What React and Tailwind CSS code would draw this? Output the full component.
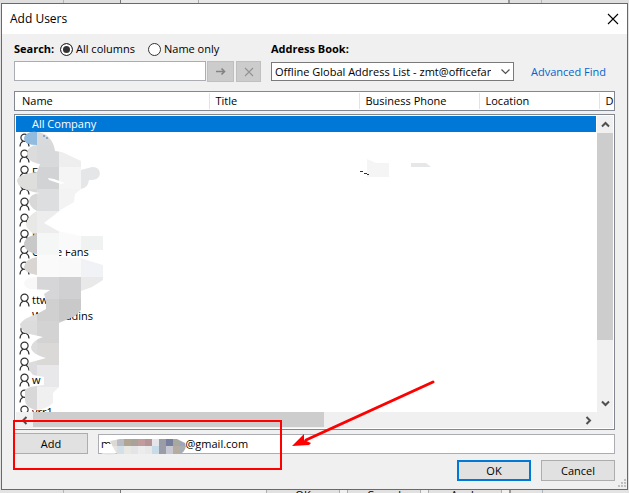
import React from "react";

const rows = [
  { name: "", icon: true },
  { name: "", icon: true },
  { name: "F", icon: true },
  { name: "", icon: true },
  { name: "", icon: true },
  { name: "", icon: true },
  { name: "N", icon: true },
  { name: "Office Fans", icon: true },
  { name: "", icon: true },
  { name: "", icon: false },
  { name: "ttw", icon: true },
  { name: "Web Addins", icon: false },
  { name: "", icon: true },
  { name: "", icon: true },
  { name: "", icon: true },
  { name: "w", icon: true },
  { name: "", icon: true },
  { name: "yrr1", icon: true },
];

const tiles = [
  ["#91bce0", "#d9dadb", "#e0e0e0", "#eeeeee"],
  ["#dcdcdc", "#d8d9da", "#eeeeee", "#eeeeee"],
  ["#dededc", "#d2d3d4", "#f5f5f5", "#e5e6e8"],
  ["#d8d8d8", "#dddedf", "#f3f3f3", "#f5f5f5"],
  ["#e8e8e6", "#ededed", "#fafafa", "#ffffff"],
  ["#c8c8c8", "#f5f6f6", "#fafafa", "#f0f2f1"],
  ["#d8d5d3", "#fafafa", "#f9f9f9", "#f1f2f5"],
  ["#f8f8f8", "#d6d6d8", "#d0d0d2", "#e9e9e9"],
  ["#dedede", "#d0d0d0", "#c9c9ca", "#ffffff"],
  ["#dcdcdc", "#d3d3d3", "#d0d0d0", "#ffffff"],
  ["#dcdcdc", "#dad9d7", "#ffffff", "#ffffff"],
  ["#dcdce0", "#e8e8ea", "#ffffff", "#ffffff"],
  ["#d8d8d8", "#f0f0f0", "#ffffff", "#ffffff"],
];

const mailTiles = [
  ["#dcd9d4", "#b9bcc4", "#b0a590", "#a8a29a", "#c09c9c", "#b49494", "#e6e6ea", "#9a9ca8", "#76809c", "#a8a8a0", "#9ca6b8"],
  ["#e6e4e0", "#d4e0e8", "#e8e8e4", "#e4e4e8", "#ececec", "#e8e8e8", "#c8dce8", "#9a9ca8", "#c8c8d4", "#b4aca0", "#a8acb4"],
];

function Person() {
  return (
    <svg width="11" height="14" viewBox="0 0 11 14" fill="none" stroke="#333" strokeWidth="1.2" aria-hidden="true">
      <circle cx="5.5" cy="4.7" r="3.6" />
      <path d="M1 13.5C1 10.5 2.4 9 4 8.2M10 13.5C10 10.5 8.6 9 7 8.2" />
    </svg>
  );
}

function Chevron({ d }) {
  return (
    <svg width="9" height="9" viewBox="0 0 9 9" fill="none" stroke="#505050" strokeWidth="2" aria-hidden="true">
      <path d={d} />
    </svg>
  );
}

function Annotations() {
  return (
    <svg className="pointer-events-none absolute left-0 top-0" width="629" height="493" viewBox="0 0 629 493" aria-hidden="true">
      <defs>
        <clipPath id="smear">
          <path d="M24 139C24 134 30 131 36 132C46 132 54 140 55 151L62 152L81 161V170L92 167C102 166 103 180 92 180H89Q88 188 81 189L75 194L74 202L62 209L44 223L58 231L81 236H103V250H59V257L80 258L103 265V280L92 287L81 291V310L75 316L59 323V387L53 393V403Q47 409 35 410Q25 407 25 400V390Q28 386 44 385V377L33 375Q28 370 28 363L46 358Q31 354 31 347Q33 340 43 337L25 333Q20 328 20 324Q24 318 37 314L46 309V300L44 294L50 290L30 289Q24 287 24 283Q25 277 37 277V275Q24 273 24 267Q25 259 37 257V254Q24 252 24 243Q26 236 35 235Q26 229 26 224Q28 215 37 211Q29 207 29 200Q30 194 40 193Q17 190 17 180Q19 174 37 172L40 164Q27 162 27 153Q29 145 37 145Q25 145 24 139Z" />
        </clipPath>
        <clipPath id="mailSmear">
          <path d="M110 441L120 439H177L185 443Q187 449 182 453L177 454H117L114 449Z" />
        </clipPath>
      </defs>
      <path d="M59 240H103V249H59ZM37 247H59V258H37Z" fill="#fff" />
      <g clipPath="url(#smear)" shapeRendering="crispEdges">
        {tiles.map((row, r) =>
          row.map((c, i) => <rect key={`${r}-${i}`} x={15 + i * 22} y={123 + r * 22} width="22" height={r === 12 ? 26 : 22} fill={c} />)
        )}
      </g>
      <path d="M48 178L54 179L65 183L61 184L49 180Z" fill="#fff" />
      <path d="M43 136h2M46 138h2" stroke="#3f70b0" />
      <path d="M367 159L376 163H389V177H367Z" fill="#f5f5f5" />
      <path d="M411 163H426L431 167H411Z" fill="#e6e7e8" />
      <path d="M360 171.500h3M364 173.500h3M367 174.500h2" stroke="#333" />
      <path d="M104 444H112V450H104Z" fill="#fff" />
      <path d="M101 453H117Q112 456 103 454Z" fill="#e3e3e3" />
      <g clipPath="url(#mailSmear)" shapeRendering="crispEdges">
        {mailTiles.map((row, r) =>
          row.map((c, i) => <rect key={`${r}-${i}`} x={110 + i * 7} y={439 + r * 7} width="7" height="8" fill={c} />)
        )}
      </g>
      <rect x="14" y="421" width="267" height="48" fill="none" stroke="#f00" strokeWidth="2" />
      <path d="M433 382L306 440" stroke="#f00" strokeWidth="3" strokeLinecap="round" />
      <path d="M292 446L304 434L304 440L311 443L309 445Z" fill="#f00" />
    </svg>
  );
}

const push = "h-[21px] w-[74px] border border-[#adadad] bg-[#e1e1e1] text-center";
const th = "border-r border-[#e3e3e3] pl-[6px] text-left font-normal";

export default function App() {
  return (
    <div className="relative flex min-h-screen flex-col overflow-hidden bg-[#e3e3e3] font-['Open_Sans','Noto_Sans',sans-serif] text-[11px] leading-4 text-black">
      <div className="flex h-[3px] bg-[#dfdfdf]" aria-hidden="true">
        <div className="w-16 border-r border-[#b5b5b5]" />
        <div className="w-[57px] border-r border-[#777]" />
        <div className="w-[78px] border-r border-[#aaa] bg-[#e8e8e8]" />
        <div className="w-[311px] border-r-2 border-[#999] bg-[#e8e8e8]" />
        <div className="w-[32px] border-r border-[#b5b5b5]" />
      </div>

      <main className="mx-px flex flex-col border border-[#68696b] bg-[#f0f0f0]">
        <header className="flex h-[30px] items-center justify-between bg-white pl-2 pr-2">
          <h1 className="text-xs">Add Users</h1>
          <button type="button" aria-label="Close" className="block">
            <svg width="12" height="12" viewBox="0 0 12 12" stroke="#000" strokeWidth="1.1" aria-hidden="true">
              <path d="M1 1L11 11M11 1L1 11" />
            </svg>
          </button>
        </header>

        <div className="flex flex-col px-3">
          <div className="flex pt-[7px]">
            <div className="w-[257px]">
              <div className="flex h-4 items-center">
                <label htmlFor="search" className="w-[46px] font-bold">Search:</label>
                <label className="flex w-[88px] items-center gap-[3px] whitespace-nowrap">
                  <input type="radio" name="scope" defaultChecked className="size-[13px] appearance-none rounded-full border border-[#333] bg-white shadow-[inset_0_0_0_2px_white] checked:bg-[#333]" />
                  All columns
                </label>
                <label className="flex items-center gap-[3px] whitespace-nowrap">
                  <input type="radio" name="scope" className="size-[13px] appearance-none rounded-full border border-[#333] bg-white" />
                  Name only
                </label>
              </div>
              <div className="flex pt-1">
                <input id="search" type="text" className="h-5 w-48 border border-[#abadb3] bg-white px-1 outline-none" />
                <button type="button" disabled aria-label="Search" className="ml-px flex h-[21px] w-[27px] items-center justify-center border border-[#bfbfbf] bg-[#ccc]">
                  <svg width="11" height="9" viewBox="0 0 11 9" fill="none" stroke="#838383" strokeWidth="1.6" aria-hidden="true">
                    <path d="M1 4.500H10M6.500 1.500L9.500 4.500L6.500 7.500" />
                  </svg>
                </button>
                <button type="button" disabled aria-label="Clear" className="ml-0.5 flex h-[21px] w-[25px] items-center justify-center border border-[#bfbfbf] bg-[#ccc]">
                  <svg width="10" height="10" viewBox="0 0 10 10" stroke="#939393" strokeWidth="1.1" aria-hidden="true">
                    <path d="M1 1L9 9M9 1L1 9" />
                  </svg>
                </button>
              </div>
            </div>
            <div>
              <label htmlFor="book" className="block h-4 font-bold">Address Book:</label>
              <div className="flex items-center pt-[5px]">
                <div className="relative">
                  <select id="book" className="block h-[19px] w-[243px] appearance-none border border-[#7a7a7a] bg-white pl-[3px] pr-[22px] outline-none">
                    <option>Offline Global Address List - zmt@officefans.com</option>
                  </select>
                  <svg className="pointer-events-none absolute right-1 top-[7px]" width="9" height="6" viewBox="0 0 9 6" fill="none" stroke="#505050" strokeWidth="1.2" aria-hidden="true">
                    <path d="M.5 .5L4.500 4.500L8.500 .5" />
                  </svg>
                </div>
                <a href="#find" className="ml-[17px] whitespace-nowrap text-[#0066cc]">Advanced Find</a>
              </div>
            </div>
          </div>

          <div className="mt-[9px] overflow-hidden border border-[#828790] bg-white py-px">
            <table className="h-4 w-full table-fixed">
              <thead>
                <tr className="h-4">
                  <th className="w-[194px] border-r border-[#e3e3e3] py-0 pl-[7px] text-left font-normal">Name</th>
                  <th className={`w-[150px] ${th}`}>Title</th>
                  <th className={`w-[120px] ${th}`}>Business Phone</th>
                  <th className={`w-[120px] ${th}`}>Location</th>
                  <th className="pl-[6px] text-left font-normal">D</th>
                </tr>
              </thead>
            </table>
          </div>

          <div className="mt-[3px] border border-[#828790] bg-white p-px">
            <div className="flex">
              <div className="h-[296px] flex-1 overflow-hidden">
                <table className="w-full" aria-label="Address list">
                  <tbody>
                    <tr className="h-4 bg-[#0078d7] text-white">
                      <td className="py-0 pl-4">All Company</td>
                    </tr>
                    {rows.map((r, i) => (
                      <tr key={i} className="h-4">
                        <td className="p-0">
                          <span className="flex h-4 items-center pl-[3px]">
                            <span className="w-[13px]">{r.icon && <Person />}</span>
                            {r.name}
                          </span>
                        </td>
                      </tr>
                    ))}
                  </tbody>
                </table>
              </div>
              <div className="ml-px flex w-4 flex-col items-center bg-[#f0f0f0]">
                <button type="button" aria-label="Scroll up" className="flex h-[17px] w-4 items-center justify-center"><Chevron d="M1 6.500L4.500 3L8 6.500" /></button>
                <div className="h-[207px] w-4 bg-[#cdcdcd]" />
                <button type="button" aria-label="Scroll down" className="mt-auto flex h-[17px] w-4 items-center justify-center"><Chevron d="M1 2.500L4.500 6L8 2.500" /></button>
              </div>
            </div>
            <div className="flex h-4 bg-[#f0f0f0] pr-4">
              <button type="button" aria-label="Scroll left" className="flex w-[17px] items-center justify-center"><Chevron d="M6.500 1L3 4.500L6.500 8" /></button>
              <div className="h-[15px] w-[291px] bg-[#cdcdcd]" />
              <button type="button" aria-label="Scroll right" className="ml-auto flex w-[17px] items-center justify-center"><Chevron d="M2.500 1L6 4.500L2.500 8" /></button>
            </div>
          </div>

          <div className="mt-[3px] flex items-center gap-[10px]">
            <button type="button" className={push}>Add</button>
            <input type="text" aria-label="Users to add" defaultValue={"m" + "\u00a0".repeat(26) + "@gmail.com"} className="h-5 min-w-0 flex-1 border border-[#abadb3] bg-white px-[2px] outline-none" />
          </div>

          <div className="mb-2 mt-[6px] flex justify-end gap-[10px]">
            <button type="button" className="h-[21px] w-[74px] border-2 border-[#0078d7] bg-[#e1e1e1] text-center leading-4">OK</button>
            <button type="button" className={push}>Cancel</button>
          </div>
        </div>
      </main>

      <div className="flex h-[3px] overflow-hidden" aria-hidden="true">
        <div className="w-16 border-r border-[#b5b5b5]" />
        <div className="w-[57px] border-r border-[#777]" />
        <div className="flex w-[390px] justify-end gap-[7px] border-r-2 border-[#999] bg-[#f0f0f0] pr-[7px]">
          {["OK", "Cancel", "Apply"].map((t) => (
            <span key={t} className="h-4 w-[74px] border-x border-[#adadad] bg-[#e1e1e1] text-center leading-[10px]">{t}</span>
          ))}
        </div>
        <div className="w-[32px] border-r border-[#b5b5b5]" />
      </div>

      <svg className="pointer-events-none absolute left-[618px] top-[479px]" width="9" height="9" fill="#bfbfbf" aria-hidden="true">
        <path d="M6 0h2v2h-2zM3 3h2v2h-2zM6 3h2v2h-2zM0 6h2v2h-2zM3 6h2v2h-2zM6 6h2v2h-2z" />
      </svg>
      <Annotations />
    </div>
  );
}
